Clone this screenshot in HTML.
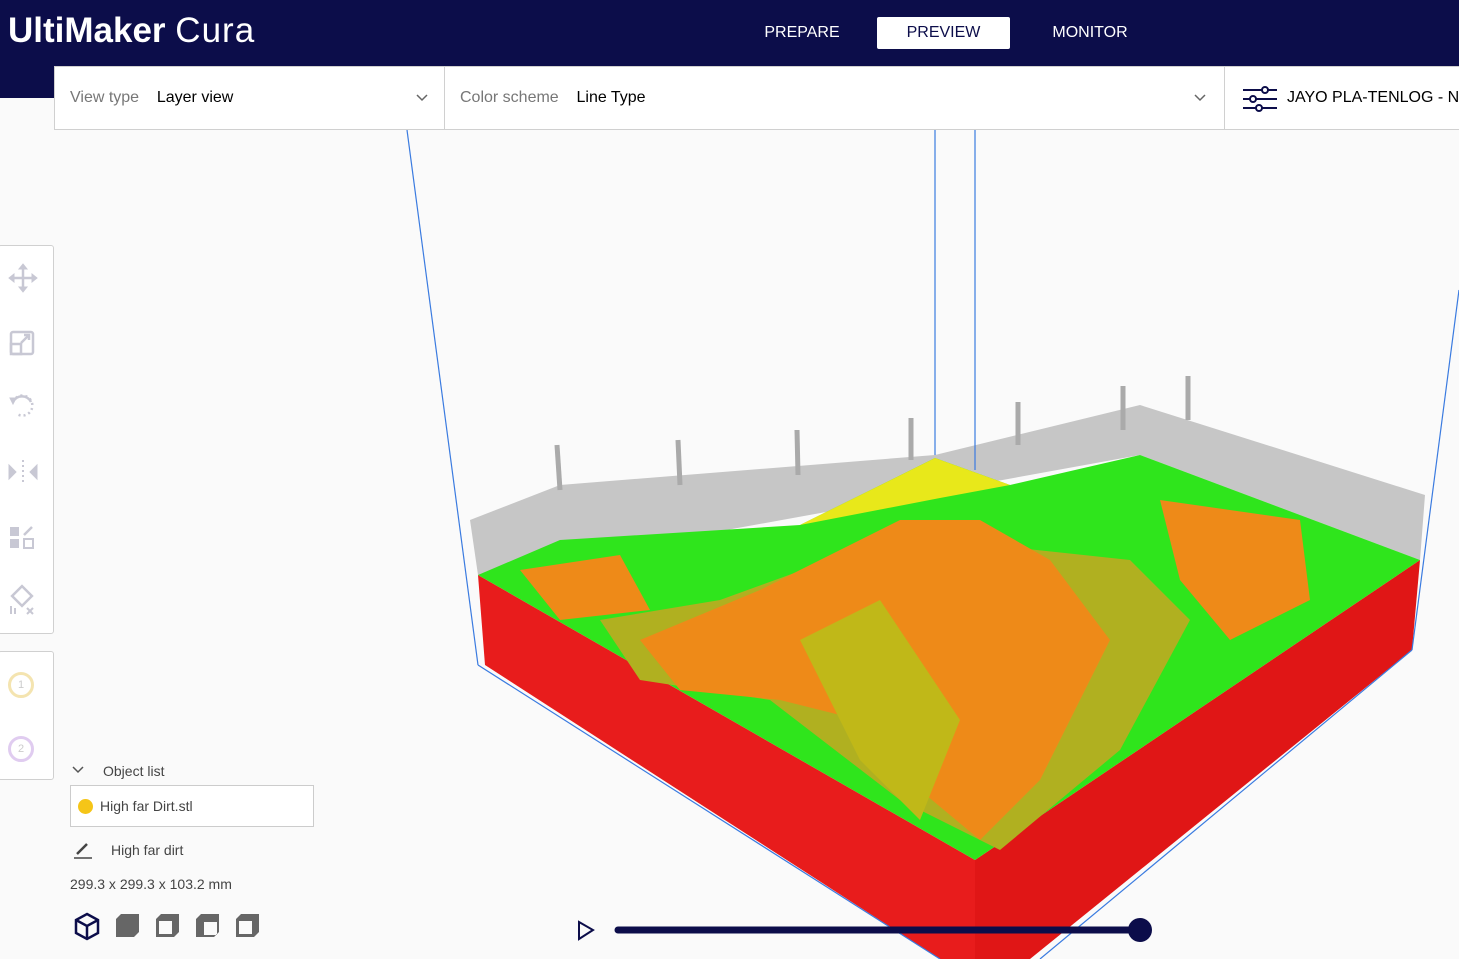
<!DOCTYPE html>
<html><head><style>
*{margin:0;padding:0;box-sizing:border-box}
body{width:1459px;height:959px;overflow:hidden;background:#fafafa;font-family:"Liberation Sans",sans-serif;position:relative}
.hdr{position:absolute;left:0;top:0;width:1459px;height:66px;background:#0c0d4a}
.hdr2{position:absolute;left:0;top:66px;width:54px;height:32px;background:#0c0d4a}
.logo{position:absolute;left:8px;top:11px;color:#fff;font-size:35px}
.tab{position:absolute;top:17px;height:32px;line-height:32px;font-size:16px;color:#fff;text-align:center}
.bar{position:absolute;top:66px;height:64px;background:#fff;border:1px solid #d0d0d0;font-size:16px;line-height:62px}
.lbl{color:#777}
.side{position:absolute;left:-2px;background:#fff;border:1px solid #d0d0d0;border-radius:3px}
</style></head><body>
<svg style="position:absolute;left:0;top:0" width="1459" height="959">
<polygon points="470,520 560,485 935,455 1140,405 1425,495 1420,560 1140,455 975,485 478,575" fill="#c6c6c6"/>
<g stroke="#aaa" stroke-width="5"><line x1="557" y1="445" x2="560" y2="490"/><line x1="678" y1="440" x2="680" y2="485"/><line x1="797" y1="430" x2="798" y2="475"/><line x1="911" y1="418" x2="911" y2="460"/><line x1="1018" y1="402" x2="1018" y2="445"/><line x1="1123" y1="386" x2="1123" y2="430"/><line x1="1188" y1="376" x2="1188" y2="420"/></g>
<polygon points="478,575 975,860 975,959 940,959 485,665" fill="#e81c1c"/>
<polygon points="975,860 1420,560 1412,650 1030,959 975,959" fill="#e01616"/>
<polygon points="478,575 560,540 800,525 935,458 1010,485 1140,455 1420,560 975,860" fill="#2fe51c"/>
<polygon points="800,525 935,458 1010,485 940,498" fill="#e8e81a"/>
<polygon points="600,620 720,600 830,560 990,545 1130,560 1190,620 1120,750 1000,850 900,800 770,700 640,680" fill="#b0b020"/>
<polygon points="640,640 760,590 900,520 980,520 1050,560 1110,640 1040,780 980,840 920,790 860,720 780,700 680,690" fill="#ee8a18"/>
<polygon points="1160,500 1300,520 1310,600 1230,640 1180,580" fill="#ee8a18"/>
<polygon points="520,570 620,555 650,610 560,620" fill="#ee8a18"/>
<polygon points="800,640 880,600 960,720 920,820 860,760" fill="#c0b818"/>
<g stroke="#3a7be0" stroke-width="1.2" fill="none"><line x1="407" y1="130" x2="478" y2="665"/><line x1="935" y1="130" x2="935" y2="455"/><line x1="975" y1="130" x2="975" y2="470"/><line x1="1459" y1="290" x2="1412" y2="650"/><line x1="478" y1="665" x2="940" y2="959"/><line x1="1412" y1="650" x2="1040" y2="959"/></g>
<line x1="618" y1="930" x2="1140" y2="930" stroke="#0c0d4a" stroke-width="7" stroke-linecap="round"/>
<circle cx="1140" cy="930" r="12" fill="#0c0d4a"/>
<polygon points="579,922 579,939 593,930" fill="none" stroke="#0c0d4a" stroke-width="2"/>
<g transform="translate(74,913)" fill="none" stroke="#0c0d4a" stroke-width="2.5"><polygon points="13,1 24,7 24,20 13,26 2,20 2,7"/><polyline points="2,7 13,13 24,7"/><line x1="13" y1="13" x2="13" y2="26"/></g>
<g fill="#666"><path d="M116 919 l5-5 h18 v18 l-5 5 h-18z"/><path d="M156 919 l5-5 h18 v18 l-5 5 h-18z M159 921 v13 h13 v-13z" fill-rule="evenodd"/><path d="M196 919 l5-5 h18 v18 l-5 5 h-18z M204 922 v13 h13 v-13z" fill-rule="evenodd"/><path d="M236 919 l5-5 h18 v18 l-5 5 h-18z M239 921 v13 h13 v-13z" fill-rule="evenodd"/></g>
</svg>
<div class="hdr"></div><div class="hdr2"></div>
<div class="logo"><b>UltiMaker</b> <span style="letter-spacing:1px">Cura</span></div>
<div class="tab" style="left:760px;width:84px">PREPARE</div>
<div class="tab" style="left:877px;width:133px;background:#fff;color:#0c0d4a;border-radius:2px">PREVIEW</div>
<div class="tab" style="left:1045px;width:90px">MONITOR</div>
<div class="bar" style="left:54px;width:391px;padding-left:15px"><span class="lbl">View type</span>&nbsp;&nbsp;&nbsp;&nbsp;Layer view<svg style="position:absolute;right:16px;top:27px" width="12" height="8"><polyline points="1,1 6,6 11,1" fill="none" stroke="#666" stroke-width="1.5"/></svg></div>
<div class="bar" style="left:444px;width:781px;padding-left:15px"><span class="lbl">Color scheme</span>&nbsp;&nbsp;&nbsp;&nbsp;Line Type<svg style="position:absolute;right:18px;top:27px" width="12" height="8"><polyline points="1,1 6,6 11,1" fill="none" stroke="#666" stroke-width="1.5"/></svg></div>
<div class="bar" style="left:1224px;width:240px;padding-left:62px;white-space:nowrap">JAYO PLA-TENLOG - No
<svg style="position:absolute;left:18px;top:19px" width="34" height="26" stroke="#0c0d4a" stroke-width="2" fill="#fff"><line x1="0" y1="4" x2="34" y2="4"/><line x1="0" y1="13" x2="34" y2="13"/><line x1="0" y1="22" x2="34" y2="22"/><circle cx="22" cy="4" r="3"/><circle cx="10" cy="13" r="3"/><circle cx="16" cy="22" r="3"/></svg></div>
<div class="side" style="top:245px;width:56px;height:389px">
<svg width="54" height="389" fill="#c8c8d4" stroke="#c8c8d4">
<g stroke-width="2.5"><line x1="24" y1="20" x2="24" y2="44"/><line x1="12" y1="32" x2="36" y2="32"/></g><polygon points="24,18 20,23 28,23"/><polygon points="24,46 20,41 28,41"/><polygon points="10,32 15,28 15,36"/><polygon points="38,32 33,28 33,36"/>
<g fill="none" stroke-width="2.5"><rect x="12" y="86" width="22" height="22" rx="2"/><rect x="12" y="98" width="10" height="10"/><polyline points="22,97 30,89"/><polyline points="25,89 30,89 30,94"/></g>
<g fill="none" stroke-width="2.5"><path d="M14 156 a10 10 0 1 1 4 12" stroke-dasharray="2 3"/><path d="M14 156 a10 10 0 0 1 18 0"/></g><polygon points="11,152 17,152 14,158"/>
<polygon points="10,219 17,226 10,233"/><polygon points="38,219 31,226 38,233"/><g stroke-width="2" stroke-dasharray="2 3"><line x1="24" y1="214" x2="24" y2="238"/></g>
<rect x="11" y="281" width="9" height="9" stroke="none"/><rect x="11" y="293" width="9" height="9" stroke="none"/><rect x="25" y="293" width="9" height="9" fill="none" stroke-width="2"/><line x1="25" y1="289" x2="33" y2="281" stroke-width="2.5"/>
<g fill="none" stroke-width="2.5"><rect x="16" y="343" width="14" height="14" transform="rotate(45 23 350)"/></g><g stroke-width="2"><line x1="12" y1="360" x2="12" y2="368"/><line x1="16" y1="362" x2="16" y2="368"/><line x1="28" y1="362" x2="34" y2="368"/><line x1="34" y1="362" x2="28" y2="368"/></g>
</svg></div>
<div class="side" style="top:651px;width:56px;height:129px">
<div style="position:absolute;left:9px;top:20px;width:26px;height:26px;border:3px solid #f4e4b0;border-radius:50%;font-size:11px;color:#ccc;text-align:center;line-height:20px">1</div>
<div style="position:absolute;left:9px;top:84px;width:26px;height:26px;border:3px solid #e0ccf0;border-radius:50%;font-size:11px;color:#ccc;text-align:center;line-height:20px">2</div></div>
<svg style="position:absolute;left:72px;top:766px" width="12" height="8"><polyline points="1,1 6,6 11,1" fill="none" stroke="#555" stroke-width="1.5"/></svg>
<div style="position:absolute;left:103px;top:763px;font-size:14px;color:#444">Object list</div>
<div style="position:absolute;left:70px;top:785px;width:244px;height:42px;background:#fff;border:1px solid #ccc;font-size:14px;color:#444;line-height:40px;padding-left:29px">High far Dirt.stl<span style="position:absolute;left:7px;top:13px;width:15px;height:15px;border-radius:50%;background:#f5c518"></span></div>
<svg style="position:absolute;left:73px;top:842px" width="20" height="18"><line x1="4" y1="12" x2="14" y2="2" stroke="#444" stroke-width="2.5"/><line x1="1" y1="16" x2="19" y2="16" stroke="#444" stroke-width="1.5"/></svg>
<div style="position:absolute;left:111px;top:842px;font-size:14px;color:#444">High far dirt</div>
<div style="position:absolute;left:70px;top:876px;font-size:14px;color:#444">299.3 x 299.3 x 103.2 mm</div>
</body></html>
